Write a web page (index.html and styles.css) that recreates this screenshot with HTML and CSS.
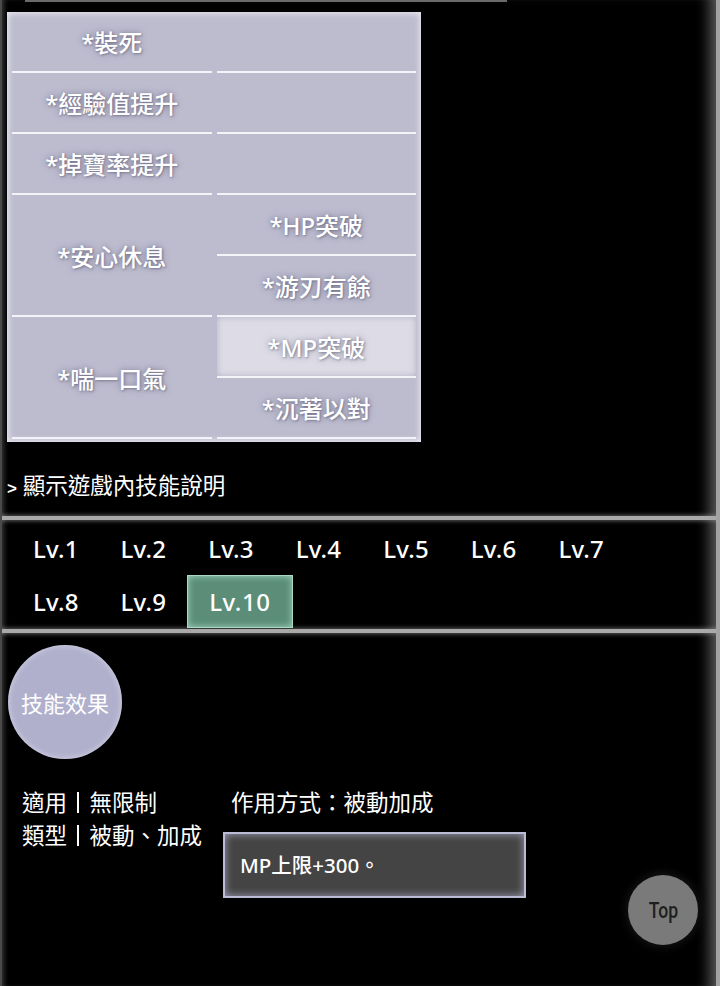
FILE: index.html
```html
<!DOCTYPE html>
<html lang="zh-Hant">
<head>
<meta charset="utf-8">
<title>技能</title>
<link rel="stylesheet" href="styles.css">
</head>
<body>
<div class="page">
  <div class="topline"></div>
  <table class="tree">
    <tr><td>*裝死</td><td></td></tr>
    <tr><td>*經驗值提升</td><td></td></tr>
    <tr><td>*掉寶率提升</td><td></td></tr>
    <tr><td rowspan="2">*安心休息</td><td>*HP突破</td></tr>
    <tr><td>*游刃有餘</td></tr>
    <tr><td rowspan="2">*喘一口氣</td><td class="hl">*MP突破</td></tr>
    <tr><td>*沉著以對</td></tr>
  </table>
  <div class="toggle"><span class="arrow">&gt;</span> 顯示遊戲內技能說明</div>
  <div class="sep"></div>
  <div class="levels">
    <span class="lv">Lv.1</span>
    <span class="lv">Lv.2</span>
    <span class="lv">Lv.3</span>
    <span class="lv">Lv.4</span>
    <span class="lv">Lv.5</span>
    <span class="lv">Lv.6</span>
    <span class="lv">Lv.7</span>
    <span class="lv">Lv.8</span>
    <span class="lv">Lv.9</span>
    <span class="lv active">Lv.10</span>
  </div>
  <div class="sep"></div>
  <div class="effect">技能效果</div>
  <div class="info">
    <div class="meta">
      <div>適用<span class="bar">｜</span>無限制</div>
      <div>類型<span class="bar">｜</span>被動、加成</div>
    </div>
    <div class="detail">
      <div class="mode">作用方式：被動加成</div>
      <div class="desc">MP上限+300。</div>
    </div>
  </div>
  <div class="top-btn"><span>Top</span></div>
</div>
</body>
</html>
```
FILE: styles.css
```css
html, body {
  margin: 0;
  padding: 0;
  background: #000;
}
body {
  font-family: "Noto Sans", "Noto Sans CJK TC", sans-serif;
  color: #fff;
}
.page {
  position: relative;
  box-sizing: border-box;
  width: 720px;
  height: 986px;
  overflow: hidden;
  border-left: 2px solid #4a4a4a;
  border-right: 4px solid #a2a2a2;
  box-shadow: inset -16px 0 14px -10px rgba(170,170,170,0.55), inset 5px 0 5px -3px rgba(90,90,90,0.6);
}
.topline {
  margin-left: 23px;
  width: 482px;
  height: 2px;
  background: #6a6a6a;
}
.tree {
  margin: 10px 0 0 5px;
  width: 414px;
  table-layout: fixed;
  border-collapse: separate;
  border-spacing: 5px 0;
  padding: 0 0 3px;
  background: #bdbccf;
  box-shadow: inset 0 0 6px 1px rgba(255,255,255,0.75);
}
.tree td {
  height: 61px;
  padding: 0;
  box-sizing: border-box;
  border-bottom: 2px solid #f4f4f8;
  text-align: center;
  vertical-align: middle;
  font-size: 24px;
  font-weight: 500;
  color: #fff;
  text-shadow: 0 0 6px rgba(70,70,100,0.6), 1px 1px 2px rgba(70,70,100,0.4);
}
.tree td.hl {
  background: #dddce6;
  box-shadow: inset 0 0 6px rgba(150,150,175,0.6);
}
.toggle {
  margin: 29px 0 0 5px;
  font-size: 22.5px;
  line-height: 30px;
}
.toggle .arrow {
  font-size: 17px;
  font-weight: 700;
  font-family: "Liberation Sans", sans-serif;
}
.sep {
  height: 4px;
  margin: 12px -4px 0;
  background: #a9a9a9;
  box-shadow: 0 0 4px 1px rgba(150,150,150,0.6);
}
.levels + .sep { margin-top: 1px; }
.levels {
  display: flex;
  flex-wrap: wrap;
  width: 670px;
  padding: 2px 0 0 10px;
}
.lv {
  display: block;
  box-sizing: border-box;
  height: 53px;
  line-height: 53px;
  padding: 0 21px;
  font-size: 24px;
  font-weight: 500;
  letter-spacing: 0.2px;
  color: #fff;
}
.lv.active {
  background: #5b8d79;
  border: 1px solid #a9d9c2;
  line-height: 51px;
  padding: 0 21px;
  letter-spacing: 0.6px;
  box-shadow: inset 0 0 7px rgba(180,235,210,0.8);
}
.effect {
  width: 114px;
  height: 114px;
  margin: 12px 0 0 6px;
  border-radius: 50%;
  background: #b1b0cc;
  box-shadow: inset 0 0 6px rgba(240,240,255,0.6);
  display: flex;
  align-items: center;
  justify-content: center;
  font-size: 22px;
  color: #fff;
}
.info {
  display: flex;
  margin-top: 27px;
  font-size: 22.5px;
  line-height: 33px;
}
.meta {
  width: 201px;
  padding-left: 20px;
}
.bar {
  display: inline-block;
  width: 1em;
  color: transparent;
  background: linear-gradient(#fff, #fff) no-repeat center / 2px 0.95em;
  vertical-align: top;
}
.detail {
  display: flex;
  flex-direction: column;
}
.mode {
  padding-left: 8px;
}
.desc {
  box-sizing: border-box;
  width: 303px;
  height: 66px;
  margin-top: 13px;
  padding-left: 15px;
  background: #444;
  border: 2px solid #bdbcd6;
  box-shadow: inset 0 0 9px rgba(200,200,235,0.7);
  display: flex;
  align-items: center;
  font-size: 20.5px;
  font-weight: 500;
}
.top-btn {
  position: absolute;
  left: 626px;
  top: 875px;
  width: 70px;
  height: 70px;
  border-radius: 50%;
  background: #7a7a7a;
  box-shadow: 0 0 8px 3px rgba(20,20,20,0.9);
  display: flex;
  align-items: center;
  justify-content: center;
}
.top-btn span {
  font-family: "Roboto", sans-serif;
  font-size: 22px;
  font-weight: 500;
  color: #1e1e1e;
  transform: scaleX(0.8);
}
```
